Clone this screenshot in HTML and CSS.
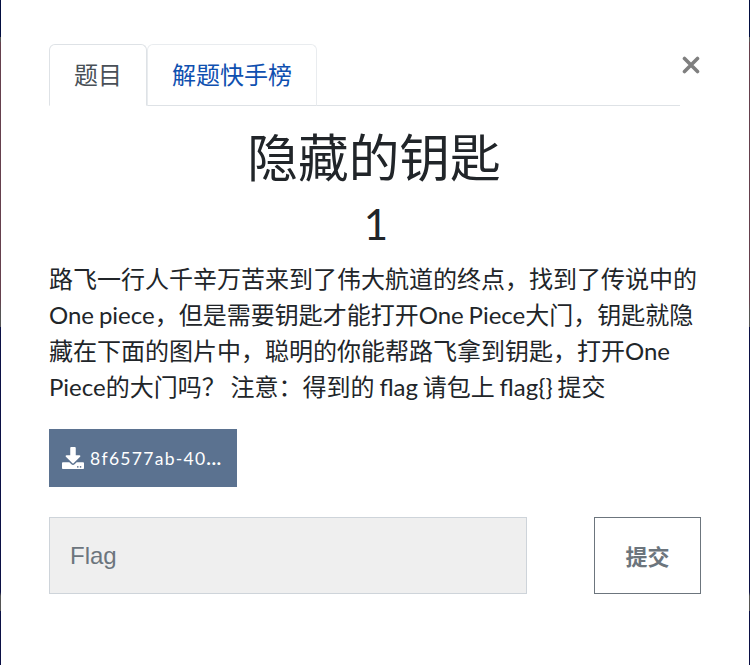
FILE: index.html
```html
<!DOCTYPE html>
<html lang="zh-CN">
<head>
<meta charset="utf-8">
<title>隐藏的钥匙</title>
<link rel="stylesheet" href="styles.css">
</head>
<body>
<main class="modal">
  <header class="top">
    <nav class="tabs">
      <a class="tab active">题目</a>
      <a class="tab">解题快手榜</a>
    </nav>
    <button class="close" aria-label="Close"><svg width="18" height="18" viewBox="0 0 18 18"><path d="M2.500 2.500l13 13M15.500 2.500l-13 13"/></svg></button>
  </header>
  <h2 class="title">隐藏的钥匙</h2>
  <h3 class="score">1</h3>
  <p class="desc">路飞一行人千辛万苦来到了伟大航道的终点，找到了传说中的<br>One piece，但是需要钥匙才能打开One Piece大门，钥匙就隐<br>藏在下面的图片中，聪明的你能帮路飞拿到钥匙，打开One<br>Piece的大门吗？ 注意：得到的 flag 请包上 flag{} 提交</p>
  <a class="file">
    <svg width="22" height="22" viewBox="0 0 512 512"><path fill="#fff" d="M216 0h80c13.300 0 24 10.700 24 24v168h87.700c17.800 0 26.700 21.500 14.100 34.100L269.700 378.300c-7.500 7.500-19.800 7.500-27.300 0L90.100 226.100c-12.600-12.600-3.700-34.100 14.100-34.100H192V24c0-13.300 10.700-24 24-24zm296 376v112c0 13.300-10.700 24-24 24H24c-13.300 0-24-10.700-24-24V376c0-13.300 10.700-24 24-24h146.700l49 49c20.100 20.100 52.500 20.100 72.600 0l49-49H488c13.300 0 24 10.700 24 24zm-124 88c0-11-9-20-20-20s-20 9-20 20 9 20 20 20 20-9 20-20zm64 0c0-11-9-20-20-20s-20 9-20 20 9 20 20 20 20-9 20-20z"/></svg>
    <span>8f6577ab-40<b>...</b></span>
  </a>
  <form class="answer">
    <input class="flag" type="text" placeholder="Flag">
    <button class="submit" type="button">提交</button>
  </form>
</main>
</body>
</html>
```
FILE: styles.css
```css
* { box-sizing: border-box; }
body {
  margin: 0;
  height: 665px;
  padding: 0 1px;
  overflow: hidden;
  background: linear-gradient(#020d40 0 37px, #555 37px 42px, #65404d 42px 300px, #555 312px 327px, #0b1045 327px 592px, #555 596px 611px, #0b1045 611px);
  font-family: Lato, "Noto Sans CJK SC", sans-serif;
  color: #212529;
}
.modal { height: 665px; padding: 44px 48px 0; background: #fff; }
.top { display: flex; height: 62px; }
.tabs { display: flex; width: 631px; border-bottom: 1px solid #dee2e6; }
.tab {
  height: 62px;
  padding: 12px 24px 0;
  border: 1px solid #e9ecef;
  border-bottom-color: #dee2e6;
  border-radius: 6px 6px 0 0;
  font-size: 24px;
  line-height: 36px;
  color: #0f50b0;
}
.tab.active { color: #495057; border-color: #dee2e6; border-bottom-color: #fff; background: #fff; }
.close { width: 20px; height: 20px; margin: 11px 0 0 1px; padding: 0; border: 0; background: none; line-height: 0; }
.close svg { display: block; margin: 0 auto; fill: none; stroke: #7f7f7f; stroke-width: 3.6; stroke-linecap: round; }
.title { margin: 21px 0 0; padding-right: 2px; height: 64px; line-height: 61px; font-size: 50.7px; font-weight: 400; text-align: center; }
.score { margin: 8px 0 0; padding-left: 2px; height: 50px; line-height: 50px; font-size: 42px; font-weight: 400; text-align: center; }
.desc { margin: 12px 0 0; font-size: 24px; line-height: 36px; white-space: nowrap; word-spacing: -1.3px; }
.file {
  display: flex;
  align-items: center;
  gap: 6px;
  width: 188px;
  height: 58px;
  margin-top: 24px;
  padding: 0 13px;
  background: #5b7290;
  color: #fff;
  font-size: 17.5px;
  letter-spacing: 1.3px;
  white-space: nowrap;
}
.file svg { flex: none; }
.file b { font-weight: 900; letter-spacing: 1px; }
.answer { display: flex; justify-content: space-between; width: 652px; margin-top: 30px; }
.flag { width: 478px; height: 77px; padding: 0 20px; border: 1px solid #ced4da; background: #efefef; font: 24px "Liberation Sans", sans-serif; }
.flag::placeholder { color: #6c757d; opacity: 1; }
.submit { width: 107px; height: 77px; padding: 0 0 2px; border: 1px solid #6c757d; background: #fff; color: #6c757d; font: 700 22px "Noto Sans CJK SC", sans-serif; }
```
